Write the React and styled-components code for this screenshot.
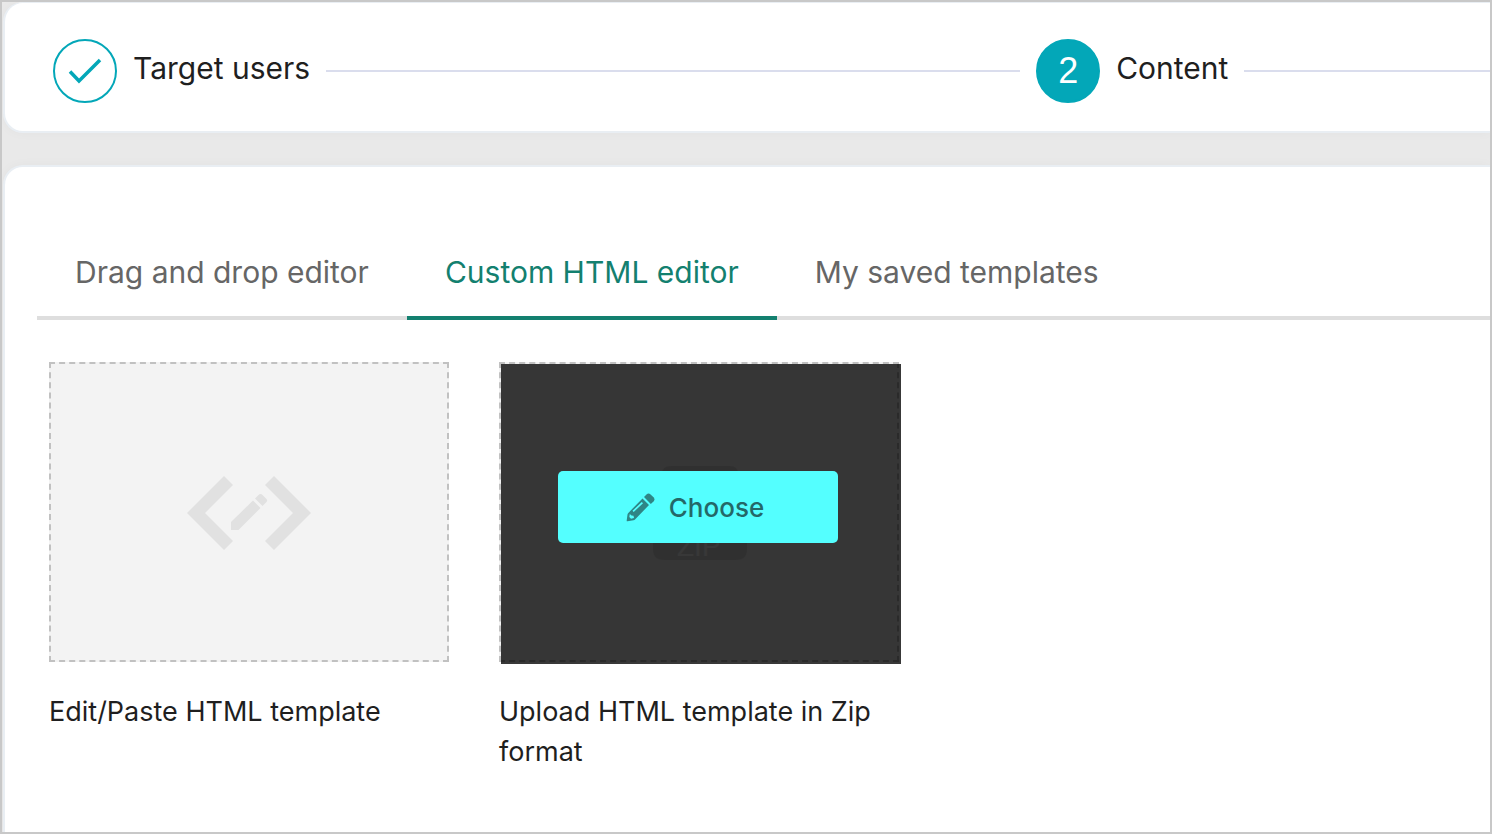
import styled, { createGlobalStyle } from 'styled-components';

const GlobalStyle = createGlobalStyle`
  * {
    box-sizing: border-box;
  }
  body {
    margin: 0;
    font-family: Inter, 'Liberation Sans', sans-serif;
    color: #1f1f1f;
  }
`;

const Page = styled.div`
  display: flex;
  flex-direction: column;
  gap: 32px;
  min-height: 100vh;
  padding-left: 1px;
  border: 2px solid #c8c8c8;
  background-color: #e9e9e9;
  overflow: hidden;
`;

const Card = styled.section`
  background-color: #fff;
  border: 2px solid #e9eef3;
  border-right: none;
  border-radius: 20px 0 0 20px;
  box-shadow: 0 0 12px rgba(0, 0, 0, 0.03);
`;

const StepCard = styled(Card)`
  border-top-width: 1px;
  padding: 36px 0 28px 48px;
`;

const ContentCard = styled(Card)`
  flex: 1;
  border-bottom: none;
  border-bottom-left-radius: 0;
  padding: 59px 0 60px 32px;
`;

const Steps = styled.ol`
  display: grid;
  grid-template-columns: 13fr 6fr;
  margin: 0;
  padding: 0;
  list-style: none;
`;

const Step = styled.li`
  display: flex;
  align-items: center;
  gap: 16px;
  padding-right: ${({ $last }) => ($last ? '0' : '16px')};

  &::after {
    content: '';
    flex: 1;
    height: 2px;
    background-color: #dadded;
  }
`;

const StepCircle = styled.span`
  display: flex;
  align-items: center;
  justify-content: center;
  width: 64px;
  height: 64px;
  border: 2px solid #03a7b8;
  border-radius: 50%;
  background-color: ${({ $active }) => ($active ? '#03a7b8' : '#fff')};
  color: ${({ $active }) => ($active ? '#fff' : '#03a7b8')};
  font-family: 'Liberation Sans', sans-serif;
  font-size: 36px;
`;

const StepLabel = styled.span`
  padding-bottom: 6px;
  font-size: 30px;
  line-height: 40px;
`;

const TabList = styled.div`
  display: flex;
  box-shadow: inset 0 -4px #dedede;
`;

const Tab = styled.button`
  padding: 26px 38px 24px;
  border: none;
  border-bottom: 4px solid ${({ $active }) => ($active ? '#13806f' : 'transparent')};
  background: none;
  color: ${({ $active }) => ($active ? '#13806f' : '#666')};
  font-family: inherit;
  font-size: 30px;
  line-height: 40px;
  cursor: pointer;
`;

const TemplateList = styled.div`
  display: flex;
  flex-wrap: wrap;
  gap: 50px;
  padding: 42px 12px 0;
`;

const Template = styled.article`
  width: 400px;
`;

const Thumbnail = styled.div`
  position: relative;
  display: flex;
  align-items: center;
  justify-content: center;
  height: 300px;
  border: 2px dashed #c1c1c1;
  background-color: #f3f3f3;
`;

const Overlay = styled.div`
  position: absolute;
  top: 0;
  left: 0;
  display: flex;
  align-items: center;
  justify-content: center;
  width: 400px;
  height: 300px;
  padding: 0 6px 14px 0;
  background-color: rgba(0, 0, 0, 0.78);
`;

const ChooseButton = styled.button`
  display: flex;
  align-items: center;
  justify-content: center;
  gap: 14px;
  width: 280px;
  height: 72px;
  padding: 0 12px 0 6px;
  border: none;
  border-radius: 5px;
  background-color: #54ffff;
  color: #246868;
  font-family: inherit;
  font-size: 26px;
  font-weight: 500;
  cursor: pointer;
`;

const TemplateName = styled.h3`
  margin: 30px 0 0;
  font-size: 27px;
  font-weight: 400;
  line-height: 40px;
`;

const ZipText = styled.text`
  font-family: 'Liberation Sans', sans-serif;
  font-size: 28px;
  fill: #fff;
`;

const CheckIcon = () => (
  <svg width='34' height='28' viewBox='0 0 34 28' fill='none' aria-hidden='true'>
    <path d='M2 14.500 L11 24 L32 3' stroke='currentColor' strokeWidth='3.500' />
  </svg>
);

const CodeIcon = () => (
  <svg width='124' height='76' viewBox='0 -1 124 76' fill='#e1e1e1' aria-hidden='true'>
    <path d='M37 1 L46 10 L18 38 L46 66 L37 75 L0 38Z' />
    <path d='M87 1 L78 10 L106 38 L78 66 L87 75 L124 38Z' />
    <path d='M44 47 L66 25.500 L73.500 33 L51.500 55 H44Z' />
    <path d='M68 23.500 L71.500 20 Q73.500 18 75.500 20 L79.500 24 Q81 25.500 79.500 27 L75.500 31Z' />
  </svg>
);

const ZipIcon = () => (
  <svg width='96' height='96' viewBox='-2 -2 96 96' fill='#dcdcdc' aria-hidden='true'>
    <path d='M18 0 H77 Q85 0 85 8 V48 H9 V8 Q9 0 18 0Z' />
    <path d='M0 48 H94 V83 Q94 94 83 94 H11 Q0 94 0 83Z' />
    <ZipText x='24' y='90'>
      ZIP
    </ZipText>
  </svg>
);

const PencilIcon = () => (
  <svg width='29' height='29' viewBox='0 0 29 29' fill='#2f8585' aria-hidden='true'>
    <path
      fillRule='evenodd'
      d='M16.500 5.500 L23 12 L9 26.500 Q8.500 27 7.500 27.200 L1.500 28.200 Q0.500 28.400 0.700 27.400 L1.500 21.500 Q1.600 20.600 2.300 19.900Z M15.800 9 L6.500 17.800 L7.700 19 L17 10.200Z M3.800 21 L3.300 24 L5 25.700 L8 25 L7.500 22.700 L5.500 22.500Z'
    />
    <path d='M18 4 L20.500 1.400 Q22.500 -0.500 24.600 1.400 L27.500 4.300 Q29.400 6.400 27.500 8.400 L24.800 11Z' />
  </svg>
);

const App = () => (
  <>
    <GlobalStyle />
    <Page>
      <StepCard>
        <Steps>
          <Step>
            <StepCircle>
              <CheckIcon />
            </StepCircle>
            <StepLabel>Target users</StepLabel>
          </Step>
          <Step $last aria-current='step'>
            <StepCircle $active>2</StepCircle>
            <StepLabel>Content</StepLabel>
          </Step>
        </Steps>
      </StepCard>
      <ContentCard>
        <TabList role='tablist'>
          <Tab type='button' role='tab' aria-selected='false'>
            Drag and drop editor
          </Tab>
          <Tab type='button' role='tab' aria-selected='true' $active>
            Custom HTML editor
          </Tab>
          <Tab type='button' role='tab' aria-selected='false'>
            My saved templates
          </Tab>
        </TabList>
        <TemplateList>
          <Template>
            <Thumbnail>
              <CodeIcon />
            </Thumbnail>
            <TemplateName>Edit/Paste HTML template</TemplateName>
          </Template>
          <Template>
            <Thumbnail>
              <ZipIcon />
              <Overlay>
                <ChooseButton type='button'>
                  <PencilIcon />
                  Choose
                </ChooseButton>
              </Overlay>
            </Thumbnail>
            <TemplateName>Upload HTML template in Zip format</TemplateName>
          </Template>
        </TemplateList>
      </ContentCard>
    </Page>
  </>
);

export default App;
